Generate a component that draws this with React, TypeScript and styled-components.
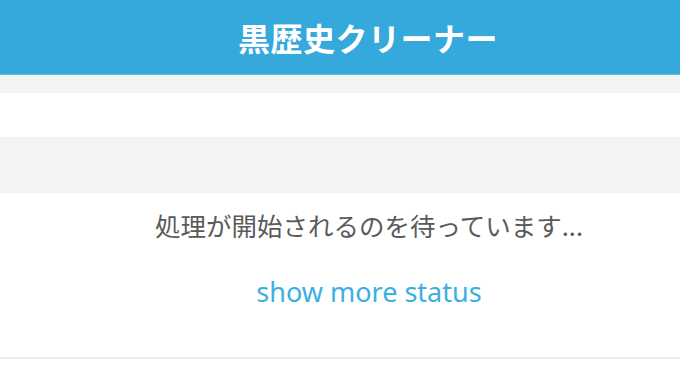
import React from 'react';
import styled, { createGlobalStyle } from 'styled-components';

const GlobalStyle = createGlobalStyle`
  html, body {
    margin: 0;
    padding: 0;
    background: #ffffff;
    overflow: hidden;
  }
  body {
    font-family: 'Noto Sans', 'Noto Sans CJK JP', sans-serif;
  }
`;

export default function App() {
  return (
    <>
      <GlobalStyle />
      <Page>
        <Header>
          <Title>黒歴史クリーナー</Title>
        </Header>
        <Band height={18} tone="gray" />
        <Band height={45} tone="white" />
        <Band height={55} tone="gray" />
        <StatusArea>
          <StatusText>処理が開始されるのを待っています...</StatusText>
          <MoreLink href="#">show more status</MoreLink>
        </StatusArea>
      </Page>
    </>
  );
}

const Page = styled.div`
  width: 680px;
  height: 372px;
  display: flex;
  flex-direction: column;
  overflow: hidden;
`;

const Header = styled.header`
  height: 74px;
  flex-shrink: 0;
  background: #35a9dc;
  border-bottom: 1px solid #5cbce6;
  display: flex;
  align-items: center;
  justify-content: center;
  padding-left: 56px;
`;

const Title = styled.h1`
  margin: 0;
  color: #ffffff;
  font-size: 32px;
  font-weight: 700;
  letter-spacing: 0.5px;
  font-family: 'Noto Sans CJK JP', sans-serif;
`;

const Band = styled.div<{ height: number; tone: 'gray' | 'white' }>`
  height: ${(p) => p.height}px;
  flex-shrink: 0;
  background: ${(p) => (p.tone === 'gray' ? '#f3f3f3' : '#ffffff')};
  border-bottom: 1px solid ${(p) => (p.tone === 'gray' ? '#f1f1f1' : '#f4f4f4')};
  box-sizing: border-box;
`;

const StatusArea = styled.section`
  height: 166px;
  flex-shrink: 0;
  box-sizing: border-box;
  border-bottom: 2px solid #ececec;
  display: flex;
  flex-direction: column;
  align-items: center;
  padding-top: 15px;
  padding-left: 58px;
`;

const StatusText = styled.p`
  margin: 0;
  color: #5a5a5a;
  font-size: 25.5px;
  font-family: 'Noto Sans CJK JP', sans-serif;
  line-height: 34px;
`;

const MoreLink = styled.a`
  margin-top: 33px;
  color: #3cafe2;
  font-size: 27px;
  line-height: 34px;
  text-decoration: none;
`;
